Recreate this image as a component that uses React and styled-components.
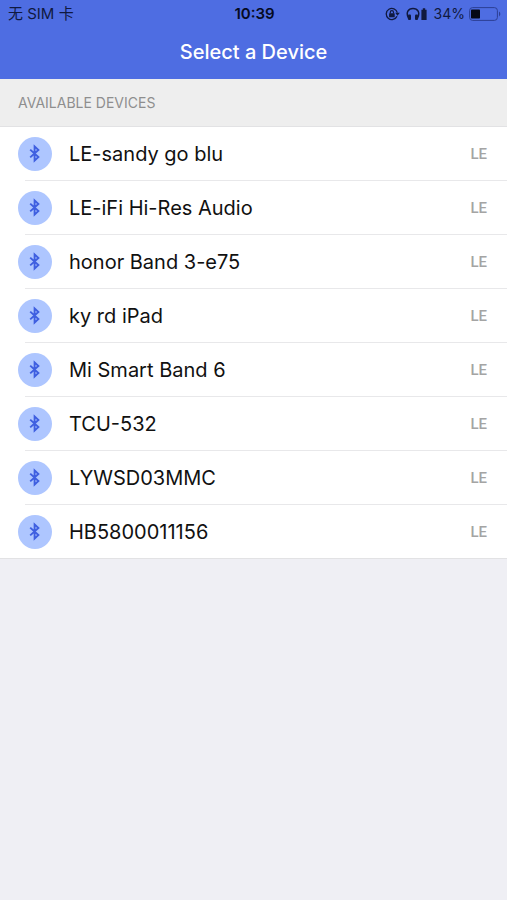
import React from "react";
import styled, { createGlobalStyle } from "styled-components";

const devices = [
    "LE-sandy go blu",
    "LE-iFi Hi-Res Audio",
    "honor Band 3-e75",
    "ky rd iPad",
    "Mi Smart Band 6",
    "TCU-532",
    "LYWSD03MMC",
    "HB5800011156",
];

const BluetoothIcon = () => (
    <svg width="14" height="20" viewBox="0 0 14 20" fill="none" stroke="#3f5fe0" strokeWidth="1.9" aria-hidden="true">
        <path d="M2.2 5.6 L10.4 13 L6.6 16.6 V2.4 L10.4 6 L2.2 13.4" />
    </svg>
);

const LockIcon = () => (
    <svg width="15" height="14" viewBox="0 0 15 14" fill="none" stroke="#10193f" aria-hidden="true">
        <path d="M12 9.2 A5.6 5.6 0 1 1 12.3 5.6" strokeWidth="1.3" />
        <path d="M10.2 5.8 H14.8 L12.5 8.8 Z" fill="#10193f" stroke="none" />
        <rect x="4.1" y="6.2" width="5.6" height="4" rx="0.5" fill="#10193f" stroke="none" />
        <path d="M5.3 6.6 V5.2 A1.6 1.6 0 0 1 8.5 5.2 V6.6" strokeWidth="1.2" />
    </svg>
);

const HeadphonesIcon = () => (
    <svg width="22" height="14" viewBox="0 0 22 14" fill="none" stroke="#10193f" aria-hidden="true">
        <path d="M2.6 11.5 C-0.6 5.5 2.4 1.4 7 1.4 S14.6 5.5 11.4 11.5" strokeWidth="1.5" />
        <rect x="2" y="7.4" width="3" height="5.6" rx="1" fill="#10193f" stroke="none" />
        <rect x="9" y="7.4" width="3" height="5.6" rx="1" fill="#10193f" stroke="none" />
        <path d="M15.4 2.8 H16.8 V1.2 H19.2 V2.8 H20.6 V13 H15.4 Z" fill="#10193f" stroke="none" />
    </svg>
);

const BatteryIcon = () => (
    <svg width="32" height="14" viewBox="0 0 32 14" fill="none" aria-hidden="true">
        <rect x="0.6" y="0.6" width="27.8" height="12.8" rx="3" stroke="#2c3f94" strokeWidth="1" />
        <rect x="2" y="2.4" width="9" height="9.2" rx="0.8" fill="#050816" />
        <path d="M30 4.6 C31.8 5.4 31.8 8.6 30 9.4 Z" fill="#2c3f94" />
    </svg>
);

export default function App() {
    return (
        <>
            <GlobalStyle />
            <Header>
                <StatusBar>
                    <Carrier>无 SIM 卡</Carrier>
                    <Time>10:39</Time>
                    <StatusIcons>
                        <LockIcon />
                        <HeadphonesIcon />
                        <Percent>34%</Percent>
                        <BatteryIcon />
                    </StatusIcons>
                </StatusBar>
                <Title>Select a Device</Title>
            </Header>
            <main>
                <SectionTitle>AVAILABLE DEVICES</SectionTitle>
                <DeviceList>
                    {devices.map((name) => (
                        <DeviceItem key={name}>
                            <DeviceButton type="button">
                                <Badge>
                                    <BluetoothIcon />
                                </Badge>
                                <DeviceName>{name}</DeviceName>
                                <DeviceType>LE</DeviceType>
                            </DeviceButton>
                        </DeviceItem>
                    ))}
                </DeviceList>
            </main>
        </>
    );
}

const GlobalStyle = createGlobalStyle`
    * {
        box-sizing: border-box;
        margin: 0;
        padding: 0;
    }

    body {
        background-color: #efeff4;
        color: #111;
        font-family: Inter, "Noto Sans CJK SC", sans-serif;
    }
`;

const Header = styled.header`
    background-color: #4e6de2;
`;

const StatusBar = styled.div`
    display: grid;
    grid-template-columns: 1fr auto 1fr;
    align-items: center;
    height: 27px;
    padding: 0 6px 0 8px;
    color: #10193f;
    font-size: 14px;
    line-height: 20px;
`;

const Carrier = styled.span`
    font-size: 15px;
`;

const Time = styled.time`
    color: #050a22;
    font-size: 15px;
    font-weight: 600;
`;

const StatusIcons = styled.div`
    display: flex;
    align-items: center;
    justify-content: flex-end;
    gap: 6px;
`;

const Percent = styled.span`
    margin-right: -2px;
`;

const Title = styled.h1`
    height: 52px;
    color: #fff;
    font-size: 20px;
    font-weight: 500;
    line-height: 50px;
    text-align: center;
`;

const SectionTitle = styled.h2`
    padding: 0 18px;
    background-color: #eee;
    border-bottom: 1px solid #e2e2e4;
    color: #8e8e8e;
    font-size: 14px;
    font-weight: 400;
    line-height: 47px;
`;

const DeviceList = styled.ul`
    background-color: #fff;
    border-bottom: 1px solid #e2e2e4;
    list-style: none;
`;

const DeviceItem = styled.li`
    margin-left: 25px;

    & + & {
        border-top: 1px solid #e8e8ea;
    }
`;

const DeviceButton = styled.button`
    display: flex;
    align-items: center;
    width: 100%;
    height: 53px;
    padding-right: 20px;
    background: none;
    border: none;
    color: inherit;
    font: inherit;
    text-align: left;
    cursor: pointer;
`;

/* the badge hangs out to the left of the divider */
const Badge = styled.span`
    display: flex;
    align-items: center;
    justify-content: center;
    flex-shrink: 0;
    width: 34px;
    height: 34px;
    margin-left: -7px;
    margin-right: 17px;
    background-color: #aec6ff;
    border-radius: 50%;
`;

const DeviceName = styled.span`
    flex: 1;
    font-size: 20px;
    line-height: 24px;
`;

const DeviceType = styled.span`
    color: #a4a4a4;
    font-family: Roboto, sans-serif;
    font-size: 15px;
    font-weight: 500;
    line-height: 20px;
`;
